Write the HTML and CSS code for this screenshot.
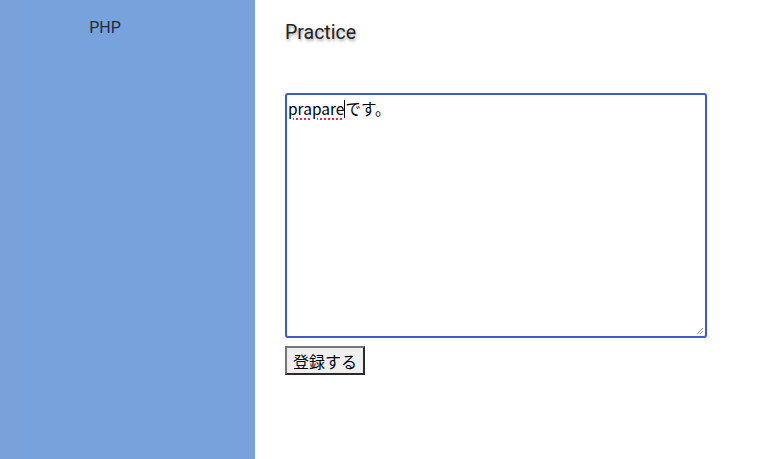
FILE: index.html
```html
<!DOCTYPE html>
<html lang="ja">
<head>
<meta charset="utf-8">
<title>Practice</title>
<link rel="stylesheet" href="styles.css">
</head>
<body>
<div class="layout">
  <aside class="sidebar">
    <div class="side-title">PHP</div>
  </aside>
  <main class="main">
    <h1 class="title">Practice</h1>
    <form class="form">
      <div class="textarea" role="textbox" aria-multiline="true"><span class="misspelled">prapare</span><span class="caret"></span>です。<svg class="grip" width="8" height="8" viewBox="0 0 8 8"><path d="M7 1 L1 7 M7 4 L4 7" stroke="#888" stroke-width="1" fill="none"/></svg></div>
      <div class="actions"><button type="button" class="btn">登録する</button></div>
    </form>
  </main>
</div>
</body>
</html>
```
FILE: styles.css
```css
html, body {
  margin: 0;
  padding: 0;
  height: 100%;
  background: #ffffff;
}
.layout {
  display: flex;
  height: 100%;
  min-height: 459px;
}
.sidebar {
  width: 255px;
  flex: 0 0 255px;
  background: #78a2da;
  background-image: linear-gradient(to right, #7aa1d9 0, #7aa1d9 22px, #78a2db 22px);
}
.side-title {
  width: 210px;
  text-align: center;
  padding-top: 19px;
  font-family: Roboto, "Noto Sans", sans-serif;
  font-size: 16px;
  line-height: 18px;
  color: #1f2a3a;
}
.main {
  flex: 1;
  padding-left: 30px;
}
.title {
  margin: 20px 0 0 0;
  font-family: Roboto, "Noto Sans", sans-serif;
  font-weight: 400;
  font-size: 19.5px;
  line-height: 25px;
  color: #222;
  text-shadow: 1px 2px 3px rgba(0, 0, 0, 0.35);
}
.form {
  margin-top: 48px;
}
.textarea {
  position: relative;
  box-sizing: border-box;
  width: 422px;
  height: 245px;
  border: 2px solid #3d5ac8;
  border-radius: 3px;
  padding: 2px 1px 1px;
  font-family: "Noto Sans CJK JP", sans-serif;
  font-size: 15.5px;
  line-height: 22px;
  color: #000;
}
.misspelled {
  text-decoration: underline dotted #e03030;
  text-decoration-thickness: 2px;
  text-underline-offset: 3px;
}
.caret {
  display: inline-block;
  width: 1px;
  height: 18px;
  background: #000;
  vertical-align: -3px;
}
.grip {
  position: absolute;
  right: 1px;
  bottom: 1px;
}
.actions {
  margin-top: 8px;
}
.btn {
  box-sizing: border-box;
  height: 29px;
  width: 80px;
  padding: 0;
  background: #efefef;
  border-style: solid;
  border-width: 2px;
  border-color: #767676 #2a2a2a #2a2a2a #767676;
  border-radius: 0;
  font-family: "Noto Sans CJK JP", sans-serif;
  font-size: 16px;
  color: #000;
}
```
